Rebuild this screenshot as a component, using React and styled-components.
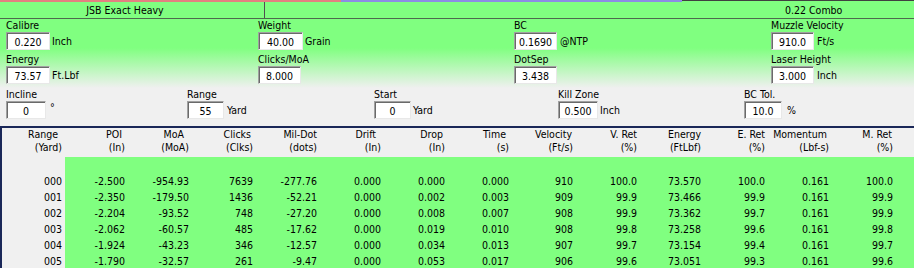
import React from "react";
import styled, { createGlobalStyle } from "styled-components";

const GREEN = "#80ff80";
const GRAY = "#f0f0f0";
const NAVY = "#1a2758";

const Global = createGlobalStyle`
  html, body { margin: 0; padding: 0; background: ${GRAY}; }
  body {
    font-family: "DejaVu Sans Condensed", "DejaVu Sans", sans-serif;
    font-size: 10.5px;
    color: #000;
  }
  #root { width: 914px; height: 268px; overflow: hidden; }
`;

const Window = styled.div`
  width: 914px;
  height: 268px;
  overflow: hidden;
  display: flex;
  flex-direction: column;
  background: ${GRAY};
`;

const TopStrip = styled.div`
  display: flex;
  height: 2px;
  flex: none;
`;

const StripSeg = styled.div`
  width: ${(p) => (p.$w ? `${p.$w}px` : "auto")};
  flex: ${(p) => (p.$w ? "none" : "1")};
  background: ${(p) => p.$bg};
`;

const StatusBar = styled.div`
  display: flex;
  height: 16px;
  line-height: 16px;
  background: ${GREEN};
  border-bottom: 1px solid #4e6a4e;
  flex: none;
`;

const StatusPanel = styled.div`
  width: ${(p) => (p.$w ? `${p.$w}px` : "auto")};
  flex: ${(p) => (p.$w ? "none" : "1")};
  border-right: ${(p) => (p.$divider ? "1px solid #505050" : "none")};
  text-align: ${(p) => (p.$w ? "center" : "left")};
  padding-right: ${(p) => (p.$w ? "14px" : "0")};
  padding-left: ${(p) => (p.$w ? "0" : "520px")};
  white-space: nowrap;
`;

const FieldsPanel = styled.div`
  display: grid;
  grid-template-columns: ${(p) => p.$cols};
  row-gap: 3px;
  padding: ${(p) => p.$pad};
  background: ${(p) =>
    p.$fade
      ? `linear-gradient(to bottom, ${GREEN} 0%, ${GREEN} 42%, ${GRAY} 100%)`
      : GRAY};
  flex: none;
`;

const Field = styled.div`
  display: flex;
  flex-direction: column;
`;

const Label = styled.div`
  height: 13px;
  line-height: 13px;
  white-space: nowrap;
`;

const InputRow = styled.div`
  display: flex;
  align-items: center;
  gap: ${(p) => p.$gap}px;
  height: 18px;
`;

const Box = styled.div`
  box-sizing: border-box;
  width: ${(p) => p.$w}px;
  height: 18px;
  line-height: 16px;
  background: #fff;
  border: 1px solid;
  border-color: #a0a0a0 #e8e8e8 #e8e8e8 #a0a0a0;
  box-shadow: inset 1px 1px 0 #6a6a6a;
  text-align: center;
  padding-top: 1px;
  white-space: nowrap;
  overflow: hidden;
`;

const Unit = styled.span`
  white-space: nowrap;
  align-self: ${(p) => (p.$sup ? "flex-start" : "center")};
`;

const Table = styled.div`
  border-top: 2px solid ${NAVY};
  border-left: 2px solid ${NAVY};
  flex: 1;
  display: flex;
  flex-direction: column;
  overflow: hidden;
`;

const Row = styled.div`
  display: grid;
  grid-template-columns: 63px repeat(13, 64px) 1fr;
  flex: none;
`;

const HeadCell = styled.div`
  background: ${GRAY};
  padding-right: ${(p) => (p.$first ? 3 : 4)}px;
  padding-bottom: 3px;
  text-align: right;
  white-space: nowrap;
`;

const HeadLine = styled.div`
  height: 13px;
  line-height: 13px;
  padding-right: ${(p) => p.$shift || 0}px;
`;

const Cell = styled.div`
  height: ${(p) => (p.$spacer ? 16 : 16)}px;
  line-height: 16px;
  background: ${(p) => (p.$fixed ? GRAY : GREEN)};
  padding-right: ${(p) => (p.$first ? 3 : 4)}px;
  text-align: right;
  white-space: nowrap;
`;

const topFields = [
  { label: "Calibre", value: "0.220", unit: "Inch", w: 44, gap: 2 },
  { label: "Weight", value: "40.00", unit: "Grain", w: 45, gap: 2 },
  { label: "BC", value: "0.1690", unit: "@NTP", w: 43, gap: 3 },
  { label: "Muzzle Velocity", value: "910.0", unit: "Ft/s", w: 43, gap: 3 },
  { label: "Energy", value: "73.57", unit: "Ft.Lbf", w: 44, gap: 2 },
  { label: "Clicks/MoA", value: "8.000", unit: "", w: 43, gap: 2 },
  { label: "DotSep", value: "3.438", unit: "", w: 43, gap: 3 },
  { label: "Laser Height", value: "3.000", unit: "Inch", w: 43, gap: 3 },
];

const midFields = [
  { label: "Incline", value: "0", unit: "°", w: 40, gap: 4, sup: true },
  { label: "Range", value: "55", unit: "Yard", w: 37, gap: 3 },
  { label: "Start", value: "0", unit: "Yard", w: 37, gap: 2 },
  { label: "Kill Zone", value: "0.500", unit: "Inch", w: 40, gap: 2 },
  { label: "BC Tol.", value: "10.0", unit: "%", w: 38, gap: 5 },
];

const headers = [
  ["Range", "(Yard)", 4],
  ["POI", "(In)", 3],
  ["MoA", "(MoA)", 5],
  ["Clicks", "(Clks)", 2],
  ["Mil-Dot", "(dots)", 0],
  ["Drift", "(In)", 5],
  ["Drop", "(In)", 2],
  ["Time", "(s)", 3],
  ["Velocity", "(Ft/s)", 1],
  ["V. Ret", "(%)", 0],
  ["Energy", "(FtLbf)", 0],
  ["E. Ret", "(%)", 0],
  ["Momentum", "(Lbf-s)", 2],
  ["M. Ret", "(%)", 1],
];

const rows = [
  ["000", "-2.500", "-954.93", "7639", "-277.76", "0.000", "0.000", "0.000", "910", "100.0", "73.570", "100.0", "0.161", "100.0"],
  ["001", "-2.350", "-179.50", "1436", "-52.21", "0.000", "0.002", "0.003", "909", "99.9", "73.466", "99.9", "0.161", "99.9"],
  ["002", "-2.204", "-93.52", "748", "-27.20", "0.000", "0.008", "0.007", "908", "99.9", "73.362", "99.7", "0.161", "99.9"],
  ["003", "-2.062", "-60.57", "485", "-17.62", "0.000", "0.019", "0.010", "908", "99.8", "73.258", "99.6", "0.161", "99.8"],
  ["004", "-1.924", "-43.23", "346", "-12.57", "0.000", "0.034", "0.013", "907", "99.7", "73.154", "99.4", "0.161", "99.7"],
  ["005", "-1.790", "-32.57", "261", "-9.47", "0.000", "0.053", "0.017", "906", "99.6", "73.051", "99.3", "0.161", "99.6"],
];

function FieldView({ f }) {
  return (
    <Field>
      <Label>{f.label}</Label>
      <InputRow $gap={f.gap}>
        <Box $w={f.w}>{f.value}</Box>
        {f.unit && <Unit $sup={f.sup}>{f.unit}</Unit>}
      </InputRow>
    </Field>
  );
}

export default function App() {
  return (
    <Window>
      <Global />
      <TopStrip>
        <StripSeg $w={341} $bg="#e38080" />
        <StripSeg $w={341} $bg="#8c8ce4" />
        <StripSeg $bg={`linear-gradient(#404040 0 1px, ${GREEN} 1px)`} />
      </TopStrip>
      <StatusBar>
        <StatusPanel $w={250} $divider>JSB Exact Heavy</StatusPanel>
        <StatusPanel>0.22 Combo</StatusPanel>
      </StatusBar>
      <FieldsPanel $fade $cols="252px 256px 257px 1fr" $pad="0 0 4px 6px">
        {topFields.map((f) => (
          <FieldView key={f.label} f={f} />
        ))}
      </FieldsPanel>
      <FieldsPanel $cols="181px 187px 184px 186px 1fr" $pad="0 0 7px 6px">
        {midFields.map((f) => (
          <FieldView key={f.label} f={f} />
        ))}
      </FieldsPanel>
      <Table>
        <Row>
          {headers.map(([title, unit, shift], i) => (
            <HeadCell key={title} $first={i === 0}>
              <HeadLine $shift={shift}>{title}</HeadLine>
              <HeadLine>{unit}</HeadLine>
            </HeadCell>
          ))}
          <HeadCell />
        </Row>
        <Row>
          {Array.from({ length: 15 }).map((_, i) => (
            <Cell key={i} $spacer $fixed={i === 0} $first={i === 0} />
          ))}
        </Row>
        {rows.map((r) => (
          <Row key={r[0]}>
            {r.map((v, i) => (
              <Cell key={i} $fixed={i === 0} $first={i === 0}>
                {v}
              </Cell>
            ))}
            <Cell />
          </Row>
        ))}
      </Table>
    </Window>
  );
}
